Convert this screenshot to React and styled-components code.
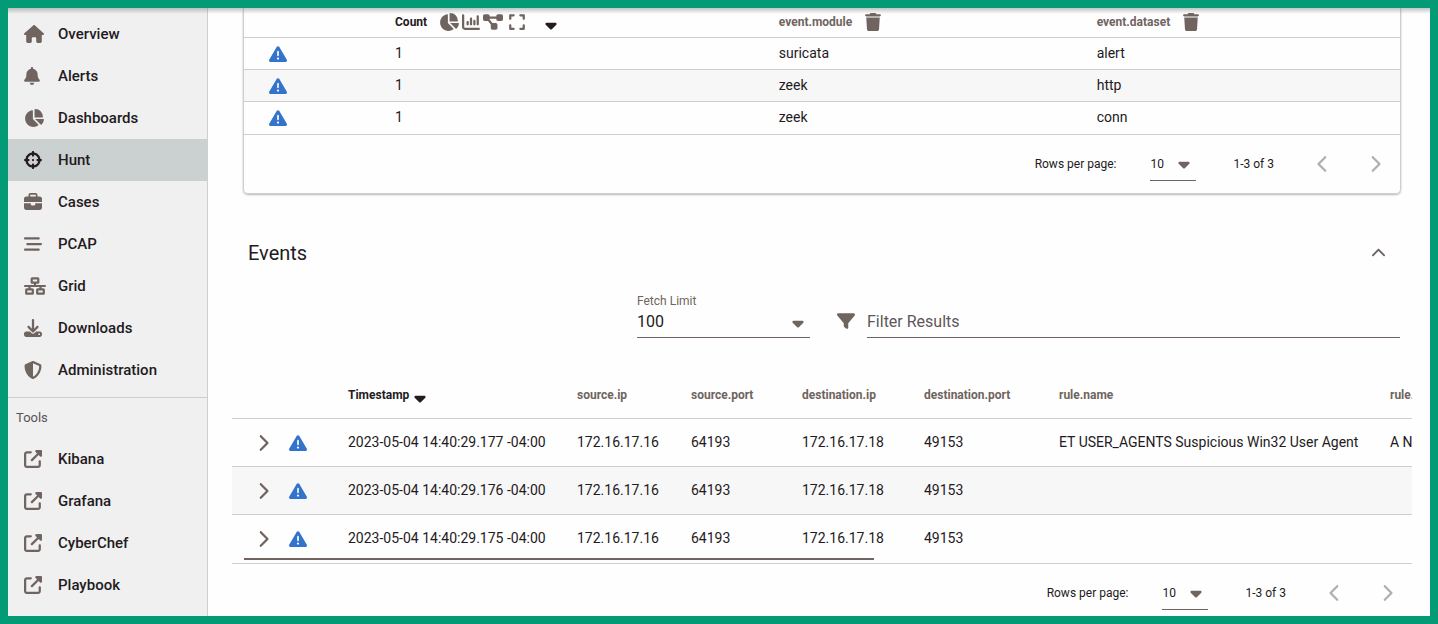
import React from "react";
import styled, { createGlobalStyle } from "styled-components";
import {
  FaHouse,
  FaBell,
  FaChartPie,
  FaCrosshairs,
  FaBriefcase,
  FaBarsStaggered,
  FaNetworkWired,
  FaDownload,
  FaShieldHalved,
  FaUpRightFromSquare,
  FaChartColumn,
  FaDiagramProject,
  FaExpand,
  FaCaretDown,
  FaTrash,
  FaTriangleExclamation,
  FaChevronLeft,
  FaChevronRight,
  FaChevronUp,
  FaFilter,
} from "react-icons/fa6";

const color = {
  frame: "#029b75",
  ink: "#231a22",
  muted: "#6f6460",
  line: "#cbcfce",
  side: "#f0f0f0",
  active: "#cbd1d0",
  stripe: "#f7f7f7",
  blue: "#3274cc",
  disabled: "#b0afad",
};

const GlobalStyle = createGlobalStyle`
  *, *::before, *::after { box-sizing: border-box; }
  body {
    margin: 0;
    color: ${color.ink};
    background: #fefefe;
    font-family: Roboto, "Liberation Sans", sans-serif;
    font-size: 14px;
  }
  button, select, input { font: inherit; color: inherit; }
`;

const Shell = styled.div`
  position: relative;
  display: flex;
  height: 100vh;
  overflow: hidden;
  border: 8px solid ${color.frame};

  &::before {
    content: "";
    position: absolute;
    inset: 0 0 auto 0;
    height: 6px;
    background: linear-gradient(rgba(120, 130, 126, 0.45), rgba(120, 130, 126, 0));
    pointer-events: none;
  }
`;

const Icon = styled.span`
  display: inline-flex;
  align-items: center;
  color: ${(p) => p.$color || color.muted};

  svg {
    display: block;
    flex: none;
    width: ${(p) => p.$width || 18}px;
    height: ${(p) => p.$height || 18}px;
  }
`;

const SortIcon = styled(Icon)`
  margin-left: 5px;
  padding-top: 7px;
`;

const Sidebar = styled.nav`
  flex: 0 0 200px;
  padding-top: 5px;
  background: ${color.side};
  border-right: 1px solid ${color.line};
`;

const NavGroup = styled.ul`
  margin: 0;
  padding: 0;
  list-style: none;
`;

const NavLink = styled.a`
  display: grid;
  grid-template-columns: 34px 1fr;
  align-items: center;
  height: 42px;
  padding-left: 16px;
  color: ${color.ink};
  background: ${(p) => (p.$active ? color.active : "transparent")};
  font-size: 15px;
  font-weight: 500;
  text-decoration: none;
`;

const ToolsTitle = styled.h2`
  height: 41px;
  margin: 6px 0 0;
  padding: 0 8px;
  border-top: 1px solid ${color.line};
  color: #5a5355;
  font-size: 13px;
  font-weight: 400;
  line-height: 40px;
`;

const Main = styled.main`
  flex: 1;
  min-width: 0;
  padding: 0 18px 0 24px;
`;

const Card = styled.section`
  margin: 0 11px;
  border: 1px solid ${color.line};
  border-top: 0;
  border-radius: 0 0 5px 5px;
  box-shadow: 0 1px 2px rgba(90, 100, 96, 0.45);
`;

const Table = styled.table`
  width: ${(p) => p.$width || "100%"};
  table-layout: fixed;
  border-collapse: separate;
  border-spacing: 0;
`;

const Th = styled.th`
  height: ${(p) => p.$height}px;
  padding: ${(p) => (p.$compact ? "0 16px 2px" : "0 16px")};
  border-bottom: 1px solid ${color.line};
  color: ${(p) => (p.$sorted ? color.ink : color.muted)};
  font-size: 12px;
  font-weight: 700;
  text-align: left;
  white-space: nowrap;
`;

const Td = styled.td`
  padding: 0 16px 2px;
  border-bottom: 1px solid ${color.line};
  white-space: nowrap;
`;

const IconTd = styled(Td)`
  padding: ${(p) => (p.$flush ? "0" : "0 16px")};
`;

const Tr = styled.tr`
  td { height: ${(p) => p.$height}px; }
  &:nth-child(even) { background: ${color.stripe}; }
  &:last-child td { height: ${(p) => p.$height + 1}px; }
`;

const HeadCell = styled.div`
  display: flex;
  align-items: center;
  gap: ${(p) => p.$gap}px;
`;

const IconRow = styled.span`
  display: flex;
  align-items: center;
  gap: 3px;
`;

const IconButton = styled.button`
  display: inline-flex;
  align-items: center;
  justify-content: center;
  width: ${(p) => (p.$width ? p.$width + "px" : "auto")};
  height: ${(p) => (p.$height ? p.$height + "px" : "auto")};
  margin: 0;
  padding: 0;
  border: 0;
  background: none;
  cursor: pointer;
`;

const RowButton = styled(IconButton)`
  padding-left: ${(p) => p.$indent || 0}px;
  vertical-align: middle;
`;

const SelectBox = styled.span`
  display: grid;
  grid-template-columns: 1fr 18px;
  align-items: center;
  width: ${(p) => p.$width}px;
  height: ${(p) => p.$height}px;
  border-bottom: 1px solid ${color.muted};
  font-size: ${(p) => p.$font}px;

  select {
    grid-area: 1 / 1 / 2 / 3;
    width: 100%;
    height: 100%;
    padding: 0;
    border: 0;
    background: none;
    appearance: none;
  }

  ${Icon} {
    grid-area: 1 / 2;
    justify-self: start;
    pointer-events: none;
  }
`;

const Footer = styled.div`
  display: flex;
  align-items: center;
  justify-content: flex-end;
  height: 58px;
  padding-right: 7px;
  font-size: 12px;
`;

const PerPage = styled.label`
  display: flex;
  align-items: center;
  gap: 34px;
`;

const Range = styled.span`
  margin: 0 31px 0 37px;
`;

const Pager = styled.span`
  display: flex;
  gap: 16px;
`;

const EventsHeader = styled.header`
  display: flex;
  align-items: center;
  justify-content: space-between;
  height: 36px;
  margin-top: 41px;
  padding: 0 16px;
`;

const Title = styled.h2`
  margin: 0;
  font-size: 20px;
  font-weight: 400;
`;

const Filters = styled.div`
  display: flex;
  align-items: flex-end;
  margin: 23px 12px 33px 405px;
`;

const Field = styled.label`
  display: flex;
  flex-direction: column;
  color: ${color.muted};
  font-size: 12px;
  line-height: 14px;

  select { padding-bottom: 2px; color: ${color.ink}; }
`;

const SearchField = styled.label`
  display: flex;
  flex: 1;
  align-items: center;
  gap: 12px;
  margin-left: 27px;

  ${Icon} { padding-bottom: 4px; }
`;

const SearchInput = styled.input`
  flex: 1;
  min-width: 0;
  height: 30px;
  padding: 0 0 3px;
  border: 0;
  border-bottom: 1px solid ${color.muted};
  border-radius: 0;
  background: none;
  font-size: 16px;
  outline: none;

  &::placeholder { color: #5f575a; opacity: 1; }
`;

const ScrollArea = styled.div`
  position: relative;
  overflow: hidden;
`;

const ScrollThumb = styled.div`
  position: absolute;
  bottom: 4px;
  left: 12px;
  width: 53.4%;
  height: 2px;
  background: ${color.muted};
`;

const pages = [
  ["Overview", FaHouse, 20],
  ["Alerts", FaBell, 16],
  ["Dashboards", FaChartPie, 20],
  ["Hunt", FaCrosshairs, 18],
  ["Cases", FaBriefcase, 18],
  ["PCAP", FaBarsStaggered, 18],
  ["Grid", FaNetworkWired, 22],
  ["Downloads", FaDownload, 18],
  ["Administration", FaShieldHalved, 18],
];

const tools = ["Kibana", "Grafana", "CyberChef", "Playbook"].map((t) => [t, FaUpRightFromSquare, 18]);

const groups = [
  ["1", "suricata", "alert"],
  ["1", "zeek", "http"],
  ["1", "zeek", "conn"],
];

const eventColumns = [
  "source.ip",
  "source.port",
  "destination.ip",
  "destination.port",
  "rule.name",
  "rule.category",
];

const eventWidths = [41, 59, 229, 114, 111, 122, 135, 331, 300];

const events = [
  ["2023-05-04 14:40:29.177 -04:00", "172.16.17.16", "64193", "172.16.17.18", "49153", "ET USER_AGENTS Suspicious Win32 User Agent", "A Network Trojan was detected"],
  ["2023-05-04 14:40:29.176 -04:00", "172.16.17.16", "64193", "172.16.17.18", "49153", "", ""],
  ["2023-05-04 14:40:29.175 -04:00", "172.16.17.16", "64193", "172.16.17.18", "49153", "", ""],
];

function NavList({ items, active }) {
  return (
    <NavGroup>
      {items.map(([name, Glyph, width]) => (
        <li key={name}>
          <NavLink href="#" $active={name === active} aria-current={name === active ? "page" : undefined}>
            <Icon $width={width} $color={name === active ? color.ink : undefined}><Glyph /></Icon>
            {name}
          </NavLink>
        </li>
      ))}
    </NavGroup>
  );
}

function Pagination() {
  return (
    <Footer>
      <PerPage>
        Rows per page:
        <SelectBox $width={46} $height={34} $font={12}>
          <select defaultValue="10">
            <option>10</option>
            <option>50</option>
          </select>
          <Icon $width={12}><FaCaretDown /></Icon>
        </SelectBox>
      </PerPage>
      <Range>1-3 of 3</Range>
      <Pager>
        <IconButton $width={36} $height={36} disabled aria-label="Previous page">
          <Icon $width={12} $color={color.disabled}><FaChevronLeft /></Icon>
        </IconButton>
        <IconButton $width={36} $height={36} disabled aria-label="Next page">
          <Icon $width={12} $color={color.disabled}><FaChevronRight /></Icon>
        </IconButton>
      </Pager>
    </Footer>
  );
}

function GroupTable() {
  return (
    <Card>
      <Table>
        <colgroup>
          <col style={{ width: 135 }} />
          <col style={{ width: "33.2%" }} />
          <col style={{ width: "27.5%" }} />
          <col />
        </colgroup>
        <thead>
          <tr>
            <Th $height={30} $compact />
            <Th $height={30} $compact $sorted>
              <HeadCell $gap={12}>
                Count
                <IconRow>
                  <IconButton aria-label="Pie chart"><Icon $width={20}><FaChartPie /></Icon></IconButton>
                  <IconButton aria-label="Bar chart"><Icon><FaChartColumn /></Icon></IconButton>
                  <IconButton aria-label="Sankey diagram"><Icon $width={20}><FaDiagramProject /></Icon></IconButton>
                  <IconButton $width={22} aria-label="Maximize"><Icon $width={16}><FaExpand /></Icon></IconButton>
                </IconRow>
                <SortIcon $width={12} $color={color.ink}><FaCaretDown /></SortIcon>
              </HeadCell>
            </Th>
            {["event.module", "event.dataset"].map((name) => (
              <Th key={name} $height={30} $compact>
                <HeadCell $gap={13}>
                  {name}
                  <IconButton aria-label={"Remove " + name}><Icon $width={16}><FaTrash /></Icon></IconButton>
                </HeadCell>
              </Th>
            ))}
          </tr>
        </thead>
        <tbody>
          {groups.map(([count, module, dataset], i) => (
            <Tr key={i} $height={32}>
              <IconTd>
                <RowButton $indent={9} aria-label="Escalate"><Icon $color={color.blue}><FaTriangleExclamation /></Icon></RowButton>
              </IconTd>
              <Td>{count}</Td>
              <Td>{module}</Td>
              <Td>{dataset}</Td>
            </Tr>
          ))}
        </tbody>
      </Table>
      <Pagination />
    </Card>
  );
}

function EventTable() {
  return (
    <ScrollArea>
      <Table $width="1442px">
        <colgroup>
          {eventWidths.map((w, i) => <col key={i} style={{ width: w }} />)}
        </colgroup>
        <thead>
          <tr>
            <Th $height={48} />
            <Th $height={48} />
            <Th $height={48} $sorted>
              <HeadCell $gap={0}>
                Timestamp
                <SortIcon $width={12} $color={color.ink}><FaCaretDown /></SortIcon>
              </HeadCell>
            </Th>
            {eventColumns.map((name) => <Th key={name} $height={48}>{name}</Th>)}
          </tr>
        </thead>
        <tbody>
          {events.map((cells) => (
            <Tr key={cells[0]} $height={48}>
              <IconTd $flush>
                <RowButton $indent={25} aria-label="Expand row"><Icon $width={12}><FaChevronRight /></Icon></RowButton>
              </IconTd>
              <IconTd>
                <RowButton aria-label="Escalate"><Icon $color={color.blue}><FaTriangleExclamation /></Icon></RowButton>
              </IconTd>
              {cells.map((text, i) => <Td key={i}>{text}</Td>)}
            </Tr>
          ))}
        </tbody>
      </Table>
      <ScrollThumb />
    </ScrollArea>
  );
}

export default function App() {
  return (
    <>
      <GlobalStyle />
      <Shell>
        <Sidebar>
          <NavList items={pages} active="Hunt" />
          <ToolsTitle>Tools</ToolsTitle>
          <NavList items={tools} />
        </Sidebar>
        <Main>
          <GroupTable />
          <EventsHeader>
            <Title>Events</Title>
            <IconButton $width={36} $height={36} aria-label="Collapse events">
              <Icon $width={15} $height={15}><FaChevronUp /></Icon>
            </IconButton>
          </EventsHeader>
          <Filters>
            <Field>
              Fetch Limit
              <SelectBox $width={173} $height={30} $font={16}>
                <select defaultValue="100">
                  <option>100</option>
                  <option>500</option>
                </select>
                <Icon $width={12}><FaCaretDown /></Icon>
              </SelectBox>
            </Field>
            <SearchField>
              <Icon><FaFilter /></Icon>
              <SearchInput type="text" placeholder="Filter Results" aria-label="Filter Results" />
            </SearchField>
          </Filters>
          <EventTable />
          <Pagination />
        </Main>
      </Shell>
    </>
  );
}
